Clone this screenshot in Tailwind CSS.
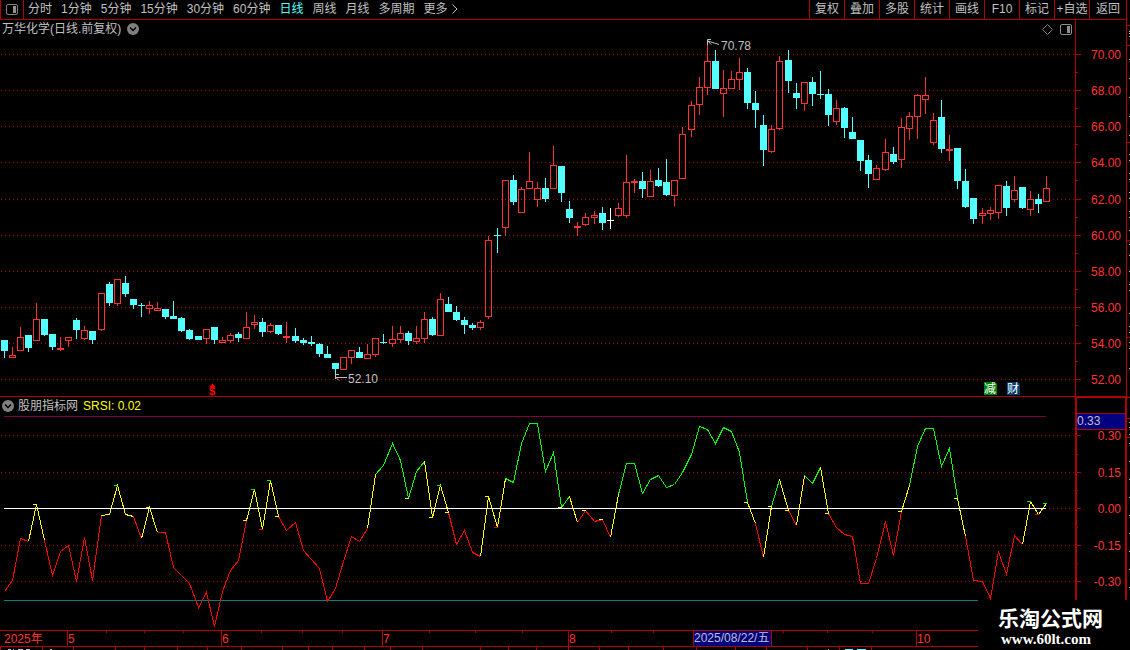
<!DOCTYPE html>
<html lang="zh-CN">
<head>
    <meta charset="UTF-8">
    <meta name="viewport" content="width=device-width, initial-scale=1.0">
    <title>万华化学 - 日线</title>
    <script src="https://cdn.jsdelivr.net/npm/@tailwindcss/browser@4"></script>
</head>
<body class="bg-black text-[#c0c0c0] text-[12px] leading-none font-['Liberation_Sans','Noto_Sans_CJK_SC',sans-serif] overflow-hidden">
    <div class="relative flex min-h-screen">
        <div class="flex-1 min-w-0 border-r border-[#b00000]">

            <!-- Панель периодов -->
            <header class="flex h-5 border-b border-[#b00000]">
                <button class="w-6 shrink-0 border-x border-[#b00000] flex items-center justify-center" aria-label="侧栏">
                    <svg class="w-3 h-3" viewBox="0 0 12 12"><rect x="0.5" y="0.5" width="11" height="10" rx="1.5" fill="none" stroke="#808080"/><rect x="7" y="2" width="3" height="7" fill="#909090"/></svg>
                </button>
                <nav class="flex flex-1 items-center gap-[9px] pl-1 pb-px whitespace-nowrap">
                    <button>分时</button>
                    <button>1分钟</button>
                    <button>5分钟</button>
                    <button>15分钟</button>
                    <button>30分钟</button>
                    <button>60分钟</button>
                    <button class="text-[#54ffff]">日线</button>
                    <button>周线</button>
                    <button>月线</button>
                    <button>多周期</button>
                    <button class="flex items-center gap-1">更多
                        <svg class="w-[6px] h-[10px]" viewBox="0 0 6 10"><path d="M0.5 0.5 5 5 0.5 9.5" fill="none" stroke="#c0c0c0"/></svg>
                    </button>
                </nav>
                <div class="flex whitespace-nowrap">
                    <button class="w-[35px] pb-px border-l border-[#b00000]">复权</button>
                    <button class="w-[35px] pb-px border-l border-[#b00000]">叠加</button>
                    <button class="w-[35px] pb-px border-l border-[#b00000]">多股</button>
                    <button class="w-[35px] pb-px border-l border-[#b00000]">统计</button>
                    <button class="w-[35px] pb-px border-l border-[#b00000]">画线</button>
                    <button class="w-[35px] pb-px border-l border-[#b00000]">F10</button>
                    <button class="w-[35px] pb-px border-l border-[#b00000]">标记</button>
                    <button class="w-[35px] pb-px border-l border-[#b00000]">+自选</button>
                    <button class="w-[37px] pb-px border-l border-[#b00000]">返回</button>
                </div>
            </header>

            <!-- Свечной график -->
            <section class="flex border-b border-[#b00000]">
                <div class="flex-1 min-w-0">
                    <div class="flex h-[18px] items-center justify-between pl-[2px] pr-[3px]">
                        <h1 class="flex items-center gap-[6px]">万华化学(日线.前复权)
                            <svg class="w-3 h-3" viewBox="0 0 12 12"><circle cx="6" cy="6" r="6" fill="#808080"/><path d="M3 4.5 6 7.5 9 4.5" fill="none" stroke="#000" stroke-width="1.5"/></svg>
                        </h1>
                        <div class="flex items-center gap-[7px]">
                            <svg class="w-[11px] h-[11px]" viewBox="0 0 11 11"><path d="M5.5 0.5 10.5 5.5 5.5 10.5 0.5 5.5Z" fill="none" stroke="#808080"/></svg>
                            <svg class="w-3 h-[11px]" viewBox="0 0 12 11"><rect x="0.5" y="0.5" width="11" height="10" rx="1.5" fill="none" stroke="#909090"/><rect x="7" y="2" width="3" height="7" fill="#909090"/></svg>
                        </div>
                    </div>
                    <svg id="priceChart" class="block w-full h-[358px] overflow-visible" viewBox="0 38 1075 358" preserveAspectRatio="none"></svg>
                </div>
                <svg id="priceAxis" class="w-[51px] h-[376px] shrink-0 border-l border-[#b00000]"></svg>
            </section>

            <!-- Индикатор SRSI -->
            <section class="flex">
                <div class="flex-1 min-w-0">
                    <h2 class="flex h-[17px] items-center gap-[5px] pl-[2px]">
                        <span class="flex items-center gap-[4px]">
                            <svg class="w-3 h-3" viewBox="0 0 12 12"><circle cx="6" cy="6" r="6" fill="#808080"/><path d="M3 4.5 6 7.5 9 4.5" fill="none" stroke="#000" stroke-width="1.5"/></svg>
                            股朋指标网
                        </span>
                        <span class="text-[#ffff00]">SRSI: 0.02</span>
                    </h2>
                    <svg id="srsiChart" class="block w-full h-[216px]" viewBox="0 414 1075 216" preserveAspectRatio="none"></svg>
                </div>
                <svg id="srsiAxis" class="w-[51px] h-[233px] shrink-0 border-l-2 border-r border-t border-[#b00000]"></svg>
            </section>

            <!-- Ось дат -->
            <svg id="dateAxis" class="block w-full h-5 overflow-visible" viewBox="0 630 1126 20" preserveAspectRatio="none"></svg>
        </div>

        <svg id="edge" class="w-[3px] h-[600px] shrink-0"></svg>

        <div class="absolute right-0 bottom-0 w-[152px] h-[50px] bg-black text-white pl-5 pt-[6px]">
            <p class="text-[21px] leading-[25px] font-bold whitespace-nowrap">乐淘公式网</p>
            <p class="pl-[3px] text-[15px] leading-[16px] font-bold font-['Liberation_Serif',serif]">www.60lt.com</p>
        </div>
    </div>

    <script>
        const RED = '#ff3232', CYAN = '#54ffff', LINE = '#b00000', GRID = '#a00000', GRAY = '#c0c0c0';
        const FONT = 'font-size="12"';

        // [high, bodyTop, bodyBottom, low, type]
        const candles = [
            [340,340,351,358,'c'],[347,355,358,358,'r'],[327,337,351,351,'r'],[335,335,348,352,'c'],[303,319,341,341,'r'],
            [319,319,335,336,'c'],[334,334,347,350,'c'],[337,348,350,351,'r'],[337,337,341,347,'r'],[318,320,330,339,'c'],
            [326,330,339,340,'r'],[331,331,340,344,'c'],[293,293,330,331,'r'],[282,284,303,306,'c'],[279,279,304,306,'r'],
            [276,283,294,297,'c'],[299,299,305,309,'c'],[303,305,306,317,'c'],[301,305,309,314,'r'],[302,308,311,311,'r'],
            [309,309,317,319,'c'],[301,316,319,319,'c'],[317,318,331,332,'c'],[329,330,339,340,'c'],[336,336,340,340,'c'],
            [329,329,339,344,'r'],[327,327,340,344,'c'],[337,340,343,343,'r'],[333,335,341,343,'r'],[332,334,338,342,'c'],
            [312,327,339,339,'r'],[315,322,325,329,'r'],[318,322,332,337,'c'],[323,325,332,333,'r'],[325,325,334,335,'c'],
            [322,336,338,343,'r'],[328,336,341,343,'c'],[338,340,343,345,'c'],[336,342,344,346,'c'],[343,344,354,357,'c'],
            [346,354,358,358,'c'],[363,363,369,378,'c'],[357,357,370,370,'r'],[350,350,358,364,'r'],[347,352,358,358,'c'],
            [344,354,359,359,'r'],[338,338,355,357,'r'],[334,342,343,344,'c'],[326,339,344,347,'r'],[326,333,340,343,'r'],
            [331,333,341,345,'c'],[326,338,342,344,'r'],[312,319,339,343,'r'],[317,319,335,336,'c'],[293,299,336,336,'r'],
            [297,304,312,312,'c'],[306,312,320,321,'c'],[317,320,325,334,'c'],[323,325,328,330,'c'],[320,322,328,330,'r'],
            [236,240,317,319,'r'],[228,235,236,253,'c'],[180,180,228,236,'r'],[175,180,202,205,'c'],[187,189,213,213,'r'],
            [152,181,189,189,'r'],[182,188,200,207,'r'],[178,188,199,202,'c'],[146,165,189,189,'r'],[166,166,193,202,'c'],
            [201,209,218,223,'c'],[222,226,228,236,'r'],[213,217,225,226,'r'],[211,215,218,224,'r'],[207,213,223,230,'c'],
            [208,220,221,229,'w'],[203,208,216,217,'r'],[155,182,216,218,'r'],[179,181,183,193,'r'],[172,181,189,198,'c'],
            [170,181,197,197,'r'],[168,180,186,187,'c'],[159,182,195,196,'c'],[180,180,196,206,'r'],[127,134,179,179,'r'],
            [101,105,130,137,'r'],[77,87,105,115,'r'],[43,61,88,95,'r'],[50,61,89,89,'c'],[70,88,94,117,'r'],
            [71,79,89,89,'r'],[58,72,80,90,'r'],[68,72,103,109,'c'],[91,103,110,128,'c'],[115,125,150,166,'c'],
            [125,129,152,153,'r'],[56,61,129,130,'r'],[50,60,81,93,'c'],[83,93,98,109,'c'],[82,82,104,111,'r'],
            [77,82,94,106,'c'],[71,94,95,99,'c'],[89,94,115,126,'c'],[100,108,122,125,'r'],[107,108,128,138,'c'],
            [117,132,139,139,'c'],[140,140,161,171,'c'],[155,160,174,188,'c'],[165,168,180,180,'r'],[139,152,170,171,'r'],
            [147,154,162,164,'c'],[118,127,160,168,'r'],[112,116,129,140,'r'],[94,95,117,139,'r'],[77,95,100,114,'r'],
            [113,120,143,145,'r'],[100,117,149,153,'c'],[135,149,151,161,'r'],[148,148,181,189,'c'],[169,181,207,208,'c'],
            [198,198,219,224,'c'],[208,213,216,224,'r'],[207,210,214,220,'r'],[185,185,213,219,'r'],[181,186,208,216,'c'],
            [176,190,200,202,'r'],[187,187,208,209,'c'],[191,199,210,216,'r'],[194,199,204,213,'c'],[176,188,202,202,'r']
        ];

        const srsi = [
            591,580,538,541,504,540,575,551,545,581,537,580,515,514,485,514,516,538,507,532,532,567,575,583,607,592,626,591,570,560,
            520,489,529,480,516,530,522,550,559,568,601,588,561,536,541,528,474,465,443,460,498,471,461,517,485,512,544,530,552,556,
            496,527,478,482,443,423,423,471,452,507,496,522,510,521,519,537,494,463,463,493,479,475,487,484,472,454,426,429,443,427,
            431,452,502,523,557,506,479,510,525,475,483,467,513,527,534,536,583,583,558,521,555,511,485,446,428,428,466,448,498,536,
            580,581,598,551,574,535,544,501,514,503
        ];

        // с какого индекса начинается участок цвета
        const runs = [[0,'r'],[3,'y'],[5,'r'],[12,'y'],[16,'r'],[17,'y'],[19,'r'],[30,'y'],[34,'r'],[45,'y'],[46,'g'],[52,'y'],
            [55,'r'],[59,'y'],[62,'g'],[70,'y'],[71,'r'],[75,'y'],[76,'g'],[92,'y'],[93,'r'],[94,'y'],[95,'g'],[96,'y'],[97,'r'],
            [98,'y'],[99,'g'],[101,'y'],[102,'r'],[111,'y'],[112,'g'],[118,'y'],[119,'r'],[126,'y'],[129,'y']];
        const marks = [[4,'y'],[14,'g'],[18,'y'],[30,'y'],[31,'g'],[32,'r'],[33,'g'],[34,'y'],[50,'y'],[53,'y'],[54,'g'],[55,'y'],
            [60,'y'],[61,'r'],[69,'y'],[72,'y'],[74,'y'],[92,'y'],[95,'y'],[97,'y'],[102,'y'],[111,'y'],[118,'y'],[127,'g'],[128,'r'],[129,'g']];
        const colors = { r: '#ff0000', y: '#ffff00', g: '#00ff00' };

        const priceTicks = [[54,'70.00'],[90,'68.00'],[126,'66.00'],[162,'64.00'],[199,'62.00'],[235,'60.00'],[271,'58.00'],[307,'56.00'],[343,'54.00'],[379,'52.00']];
        const srsiTicks = [[435,'0.30'],[472,'0.15'],[508,'0.00'],[545,'-0.15'],[581,'-0.30']];

        const xAt = i => Math.floor(4.045 + i * 8.0825);
        const rect = (x, y, w, h, fill) => `<rect x="${x}" y="${y}" width="${w}" height="${h}" fill="${fill}" shape-rendering="crispEdges"/>`;
        const text = (x, y, s, fill, extra = '') => `<text x="${x}" y="${y}" fill="${fill}" ${FONT} ${extra}>${s}</text>`;
        const grid = ticks => ticks.map(([y]) =>
            `<line x1="1" x2="1075" y1="${y + 0.5}" y2="${y + 0.5}" stroke="${GRID}" stroke-dasharray="1 3" shape-rendering="crispEdges"/>`).join('');

        function drawPrice() {
            let out = grid(priceTicks);
            candles.forEach(([h, t, b, l, type], i) => {
                const x = xAt(i);
                const c = type === 'r' ? RED : type === 'c' ? CYAN : '#ffffff';
                if (type === 'r' && b - t > 2) {
                    out += rect(x, h, 1, t - h, c) + rect(x, b, 1, l - b, c);
                    out += `<rect x="${x - 2.5}" y="${t + 0.5}" width="6" height="${b - t - 1}" fill="none" stroke="${c}" shape-rendering="crispEdges"/>`;
                } else {
                    out += rect(x, h, 1, l - h, c) + rect(x - 3, t, 7, b - t, c);
                }
            });
            // максимум и минимум
            out += `<path d="M719 44.5 708 41M707.5 45V39.5H711M708 41 711 44.5" fill="none" stroke="${GRAY}"/>`;
            out += text(721, 50, '70.78', GRAY);
            out += `<path d="M347 377.5H336M339 374.5H335.5V379M336 377.5 339 380.5" fill="none" stroke="${GRAY}"/>`;
            out += text(348, 383, '52.10', GRAY);
            // события
            out += `<path d="M209 387.5 212.5 383.5 216 387.5Z" fill="#ff0000"/>`;
            out += `<text x="209" y="395" fill="#ff0000" font-size="11" font-weight="bold">$</text>`;
            out += `<path d="M984 382H995L997 384V395H984Z" fill="#008000"/>` + text(984, 393, '减', '#ffffff');
            out += `<path d="M1007 382H1018L1020 384V395H1007Z" fill="#003c70"/>` + text(1007, 393, '财', '#ffffff');
            document.getElementById('priceChart').innerHTML = out;
        }

        function drawSrsi() {
            let out = grid(srsiTicks);
            out += rect(4, 416, 1042, 1, '#800040') + rect(4, 600, 1042, 1, '#008080');
            for (let k = 0; k < runs.length - 1; k++) {
                const pts = [];
                for (let i = runs[k][0]; i <= runs[k + 1][0]; i++) pts.push(`${xAt(i) + 0.5},${srsi[i] + 0.5}`);
                out += `<polyline points="${pts.join(' ')}" fill="none" stroke="${colors[runs[k][1]]}" shape-rendering="crispEdges"/>`;
            }
            marks.forEach(([i, c]) => { out += rect(xAt(i) - 3, srsi[i], 4, 1, colors[c]); });
            out += rect(4, 508, 1042, 1, '#ffffff');
            document.getElementById('srsiChart').innerHTML = out;
        }

        function drawAxes() {
            let out = '<g transform="translate(-1076 -20)">';
            priceTicks.forEach(([y, s]) => {
                out += rect(1076, y, 5, 1, LINE) + rect(1076, y + 18, 2, 1, LINE) + text(1121, y + 5, s, RED, 'text-anchor="end"');
            });
            document.getElementById('priceAxis').innerHTML = out + '</g>';

            out = '<g transform="translate(-1077 -398)">';
            srsiTicks.forEach(([y, s]) => {
                out += rect(1077, y, 4, 1, LINE) + text(1121, y + 5, s, RED, 'text-anchor="end"');
            });
            [454, 490, 527, 563].forEach(y => { out += rect(1077, y, 1, 1, LINE); });
            out += rect(1077, 413, 49, 17, LINE) + rect(1077, 414, 49, 15, '#000080') + text(1077, 425, '0.33', GRAY);
            document.getElementById('srsiAxis').innerHTML = out + '</g>';

            out = rect(0, 630, 1126, 1, LINE) + rect(0, 646, 1126, 1, LINE);
            [[67, '5'], [221, '6'], [382, '7'], [568, '8'], [916, '10']].forEach(([x, s]) => {
                out += rect(x, 630, 1, 16, LINE) + text(x + 1, 643, s, RED);
            });
            [106,144,183,261,302,342,429,475,522,611,653,783,827,872].forEach(x => { out += rect(x, 631, 1, 2, LINE); });
            [0,42,73,115,144,177,207,241,282,308,332,364,390,422,480,508,536,568,599,628,663,696,735,766,807,839,871].forEach(x => { out += rect(x, 647, 1, 3, LINE); });
            out += text(4, 643, '2025年', RED);
            out += rect(693, 630, 79, 16, LINE) + rect(694, 631, 77, 15, '#000080') + text(694, 642, '2025/08/22/五', GRAY);
            // верх обрезанной строки котировок
            [[8,3],[13,1],[18,5],[26,4],[50,2],[828,1]].forEach(([x, w]) => { out += rect(x, 649, w, 1, GRAY); });
            [[845,8],[857,9]].forEach(([x, w]) => { out += rect(x, 649, w, 1, CYAN); });
            document.getElementById('dateAxis').innerHTML = out;

            out = '';
            [25, 45, 142, 240, 337, 397, 418, 437].forEach(y => { out += rect(0, y, 3, 1, LINE); });
            [31,33,36,59,78,97,116,135,154,160,173,179,192,198,211,217,230,244,255,271,284,290,313,326,332,342,348,368,422,427,434,443,461,479,497,515,533,551,569,587].forEach(y => { out += rect(2, y, 1, 1, GRAY); });
            document.getElementById('edge').innerHTML = out;
        }

        drawPrice();
        drawSrsi();
        drawAxes();
    </script>
</body>
</html>
